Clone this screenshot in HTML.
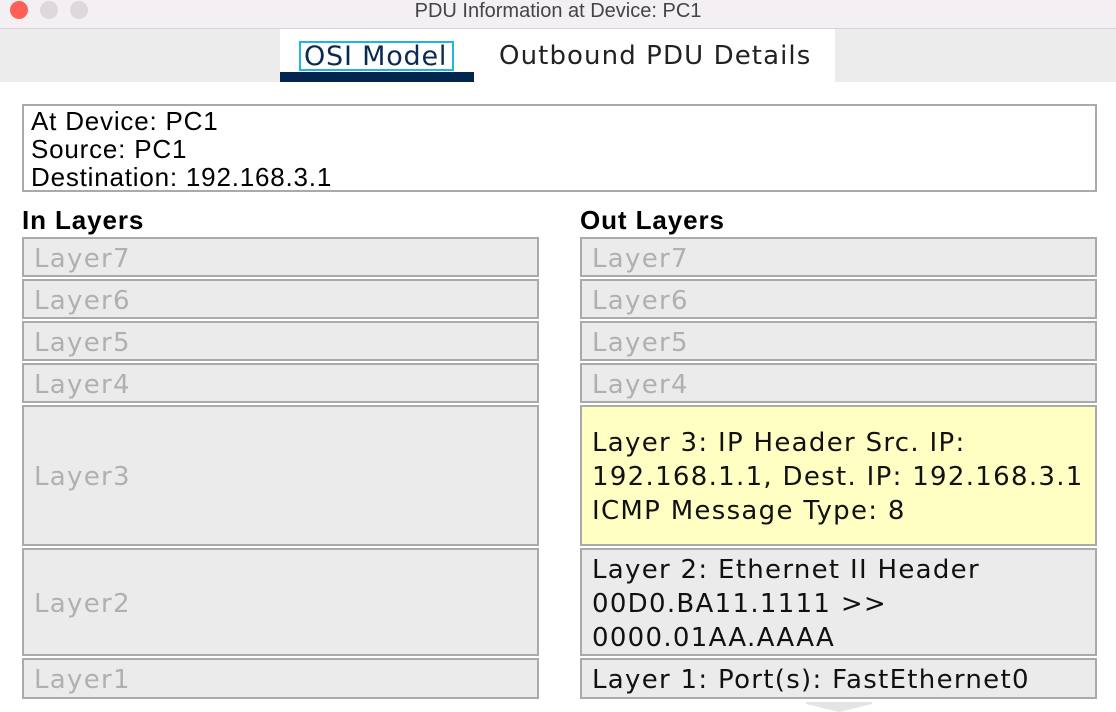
<!DOCTYPE html>
<html><head><meta charset="utf-8"><style>
body{margin:0;width:1116px;height:712px;overflow:hidden;background:#fff;position:relative;font-family:"Liberation Sans",sans-serif}
.a{position:absolute}
.title{left:0;top:0;width:1116px;height:28px;background:#f4eff3;border-bottom:1px solid #d8d4d8;text-align:center;font-size:20px;line-height:22px;color:#444}
.dot{top:1px;width:18px;height:18px;border-radius:50%;background:#dcd8dc}
.box{background:#ebebeb;border:2px solid #aaa;box-sizing:border-box;font-family:"DejaVu Sans",sans-serif;font-size:26px;letter-spacing:1.3px;color:#b0b0b0;padding:3px 0 0 10px;display:flex;align-items:center}
.out{color:#111;line-height:34px}
</style></head><body>
<div class="a title">PDU Information at Device: PC1</div>
<div class="a dot" style="left:10px;background:#fe5f57"></div>
<div class="a dot" style="left:40px"></div>
<div class="a dot" style="left:70px"></div>
<div class="a" style="left:0;top:29px;width:280px;height:53px;background:#ececec"></div>
<div class="a" style="left:835px;top:29px;width:281px;height:53px;background:#ececec"></div>
<div class="a" style="left:280px;top:72px;width:194px;height:10px;background:#03264f"></div>
<div class="a" style="left:299px;top:41px;width:151px;height:26px;border:2px solid #1fb5e8"></div>
<div class="a" style="left:304px;top:41px;font-family:'DejaVu Sans',sans-serif;font-size:27px;letter-spacing:0.8px;color:#0a2a52">OSI Model</div>
<div class="a" style="left:499px;top:41px;font-family:'DejaVu Sans',sans-serif;font-size:26px;letter-spacing:1.1px;color:#222">Outbound PDU Details</div>
<div class="a" style="left:22px;top:104px;width:1075px;height:88px;border:2px solid #aaa;box-sizing:border-box;padding:1px 0 0 7px;font-size:26px;letter-spacing:0.8px;line-height:28px;color:#000">At Device: PC1<br>Source: PC1<br>Destination: 192.168.3.1</div>
<div class="a" style="left:22px;top:205px;font-size:26px;font-weight:bold;letter-spacing:0.9px">In Layers</div>
<div class="a" style="left:580px;top:205px;font-size:26px;font-weight:bold;letter-spacing:0.9px">Out Layers</div>

<div class="a box" style="left:22px;top:237px;width:517px;height:40px">Layer7</div>
<div class="a box" style="left:22px;top:279px;width:517px;height:40px">Layer6</div>
<div class="a box" style="left:22px;top:321px;width:517px;height:40px">Layer5</div>
<div class="a box" style="left:22px;top:363px;width:517px;height:40px">Layer4</div>
<div class="a box" style="left:22px;top:405px;width:517px;height:141px">Layer3</div>
<div class="a box" style="left:22px;top:548px;width:517px;height:108px">Layer2</div>
<div class="a box" style="left:22px;top:658px;width:517px;height:41px">Layer1</div>

<div class="a box" style="left:580px;top:237px;width:517px;height:40px">Layer7</div>
<div class="a box" style="left:580px;top:279px;width:517px;height:40px">Layer6</div>
<div class="a box" style="left:580px;top:321px;width:517px;height:40px">Layer5</div>
<div class="a box" style="left:580px;top:363px;width:517px;height:40px">Layer4</div>
<div class="a box out" style="left:580px;top:405px;width:517px;height:141px;background:#ffffc4;white-space:nowrap">Layer 3: IP Header Src. IP:<br>192.168.1.1, Dest. IP: 192.168.3.1<br>ICMP Message Type: 8</div>
<div class="a box out" style="left:580px;top:548px;width:517px;height:108px">Layer 2: Ethernet II Header<br>00D0.BA11.1111 &gt;&gt;<br>0000.01AA.AAAA</div>
<div class="a box out" style="left:580px;top:658px;width:517px;height:41px">Layer 1: Port(s): FastEthernet0</div>
<svg class="a" style="left:806px;top:700px" width="66" height="12"><polygon points="0,2 66,2 66,4 33,12 0,4" fill="#e4e4e4"/></svg>
</body></html>
